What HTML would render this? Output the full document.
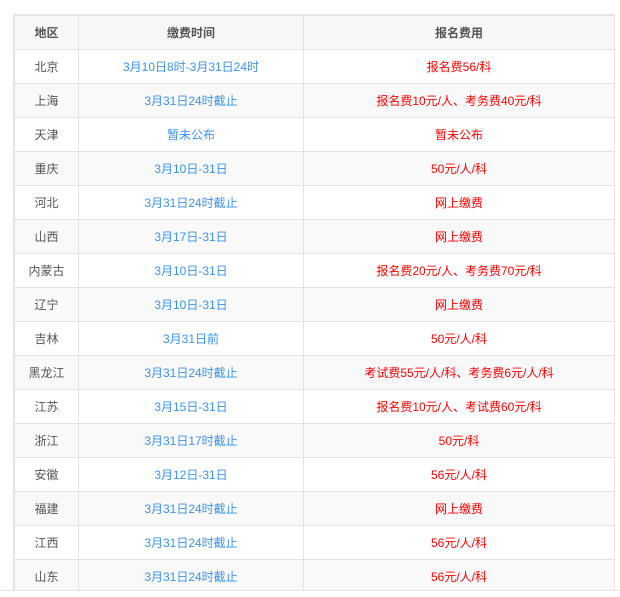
<!DOCTYPE html>
<html><head><meta charset="utf-8"><style>
body{margin:0;width:620px;height:596px;background:#fff;overflow:hidden;position:relative;font-family:"Liberation Sans","Noto Sans CJK SC",sans-serif;font-size:12px}
table{position:absolute;left:13px;top:14px;border-collapse:collapse;border-top:2px solid #e3e3e3;border-left:2px solid #e3e3e3}
td,th{border:1px solid #e3e3e3;height:33px;padding:0;text-align:center;color:#555}
th{background:#f7f7f7;font-weight:bold;color:#555;height:33px}
tr:nth-child(odd) td{background:#f9f9f9}
td.b{color:#3b93f0}td.r{color:#f00}
.cut{position:absolute;left:0;top:590px;width:620px;height:6px;background:#fff;border-top:1px solid #e6e6e6}
</style></head><body>
<table>
<tr><th style="width:63px">地区</th><th style="width:224px">缴费时间</th><th style="width:310px">报名费用</th></tr>
<tr><td>北京</td><td class="b">3月10日8时-3月31日24时</td><td class="r">报名费56/科</td></tr>
<tr><td>上海</td><td class="b">3月31日24时截止</td><td class="r">报名费10元/人、考务费40元/科</td></tr>
<tr><td>天津</td><td class="b">暂未公布</td><td class="r">暂未公布</td></tr>
<tr><td>重庆</td><td class="b">3月10日-31日</td><td class="r">50元/人/科</td></tr>
<tr><td>河北</td><td class="b">3月31日24时截止</td><td class="r">网上缴费</td></tr>
<tr><td>山西</td><td class="b">3月17日-31日</td><td class="r">网上缴费</td></tr>
<tr><td>内蒙古</td><td class="b">3月10日-31日</td><td class="r">报名费20元/人、考务费70元/科</td></tr>
<tr><td>辽宁</td><td class="b">3月10日-31日</td><td class="r">网上缴费</td></tr>
<tr><td>吉林</td><td class="b">3月31日前</td><td class="r">50元/人/科</td></tr>
<tr><td>黑龙江</td><td class="b">3月31日24时截止</td><td class="r">考试费55元/人/科、考务费6元/人/科</td></tr>
<tr><td>江苏</td><td class="b">3月15日-31日</td><td class="r">报名费10元/人、考试费60元/科</td></tr>
<tr><td>浙江</td><td class="b">3月31日17时截止</td><td class="r">50元/科</td></tr>
<tr><td>安徽</td><td class="b">3月12日-31日</td><td class="r">56元/人/科</td></tr>
<tr><td>福建</td><td class="b">3月31日24时截止</td><td class="r">网上缴费</td></tr>
<tr><td>江西</td><td class="b">3月31日24时截止</td><td class="r">56元/人/科</td></tr>
<tr><td>山东</td><td class="b">3月31日24时截止</td><td class="r">56元/人/科</td></tr>
</table>
<div class="cut"></div>
</body></html>
